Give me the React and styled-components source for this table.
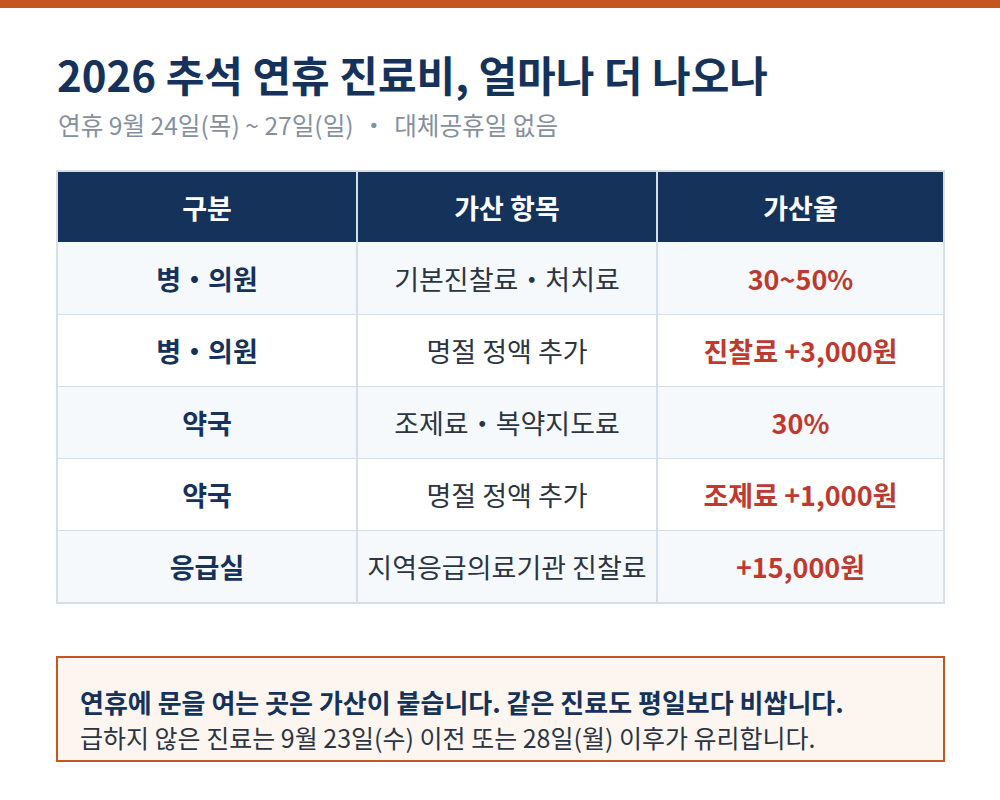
import React from "react";
import styled, { createGlobalStyle } from "styled-components";

const Global = createGlobalStyle`
  html, body { margin: 0; padding: 0; background: #ffffff; }
  body { font-family: "Noto Sans CJK KR", "Noto Sans", sans-serif; }
  * { box-sizing: border-box; }
`;

const Page = styled.div`
  width: 1000px;
  height: 800px;
  background: #fff;
  display: flex;
  flex-direction: column;
`;

const TopBar = styled.div`
  height: 8px;
  background: #c4561f;
`;

const Content = styled.div`
  padding: 38px 55px 0 56px;
  display: flex;
  flex-direction: column;
`;

const Title = styled.h1`
  margin: 0 0 0 1px;
  font-size: 42px;
  line-height: 56px;
  font-weight: 700;
  color: #15325b;
`;

const Subtitle = styled.div`
  margin: 5px 0 0 2px;
  font-size: 24.6px;
  line-height: 34px;
  color: #84909e;
`;

const Sep = styled.span`
  margin: 0 8px;
`;

const Table = styled.div`
  margin-top: 29px;
  display: grid;
  grid-template-columns: 298px 300px 1fr;
  border: 2px solid #d5dfea;
`;

const HeadCell = styled.div`
  height: 70px;
  background: #15325b;
  color: #ffffff;
  font-weight: 700;
  font-size: 27px;
  display: flex;
  align-items: center;
  justify-content: center;
  border-left: ${(p) => (p.$first ? "none" : "2px solid #d5dfea")};
`;

const Cell = styled.div`
  height: 72px;
  display: flex;
  align-items: center;
  justify-content: center;
  font-size: 27px;
  background: ${(p) => (p.$shade ? "#f5f9fc" : "#ffffff")};
  border-top: ${(p) => (p.$top ? "none" : "1px solid #d5dfea")};
  border-left: ${(p) => (p.$first ? "none" : "2px solid #d5dfea")};
  color: ${(p) =>
    p.$kind === "label" ? "#15325b" : p.$kind === "rate" ? "#c0392f" : "#2b3542"};
  font-weight: ${(p) => (p.$kind === "item" ? 400 : 700)};
`;

const Note = styled.div`
  margin-top: 52px;
  border: 2px solid #c4561f;
  background: #fdf6f0;
  padding: 26px 22px 6px 22px;
  display: flex;
  flex-direction: column;
`;

const NoteStrong = styled.div`
  font-size: 26px;
  line-height: 36px;
  font-weight: 700;
  color: #15325b;
`;

const NoteText = styled.div`
  font-size: 25px;
  line-height: 34px;
  color: #2b3542;
`;

const rows = [
  ["병・의원", "기본진찰료・처치료", "30~50%"],
  ["병・의원", "명절 정액 추가", "진찰료 +3,000원"],
  ["약국", "조제료・복약지도료", "30%"],
  ["약국", "명절 정액 추가", "조제료 +1,000원"],
  ["응급실", "지역응급의료기관 진찰료", "+15,000원"],
];

export default function App() {
  return (
    <Page>
      <Global />
      <TopBar />
      <Content>
        <Title>2026 추석 연휴 진료비, 얼마나 더 나오나</Title>
        <Subtitle>
          연휴 9월 24일(목) ~ 27일(일)<Sep>・</Sep>대체공휴일 없음
        </Subtitle>
        <Table>
          <HeadCell $first>구분</HeadCell>
          <HeadCell>가산 항목</HeadCell>
          <HeadCell>가산율</HeadCell>
          {rows.map((r, i) => (
            <React.Fragment key={i}>
              <Cell $first $shade={i % 2 === 0} $top={i === 0} $kind="label">{r[0]}</Cell>
              <Cell $shade={i % 2 === 0} $top={i === 0} $kind="item">{r[1]}</Cell>
              <Cell $shade={i % 2 === 0} $top={i === 0} $kind="rate">{r[2]}</Cell>
            </React.Fragment>
          ))}
        </Table>
        <Note>
          <NoteStrong>연휴에 문을 여는 곳은 가산이 붙습니다. 같은 진료도 평일보다 비쌉니다.</NoteStrong>
          <NoteText>급하지 않은 진료는 9월 23일(수) 이전 또는 28일(월) 이후가 유리합니다.</NoteText>
        </Note>
      </Content>
    </Page>
  );
}
